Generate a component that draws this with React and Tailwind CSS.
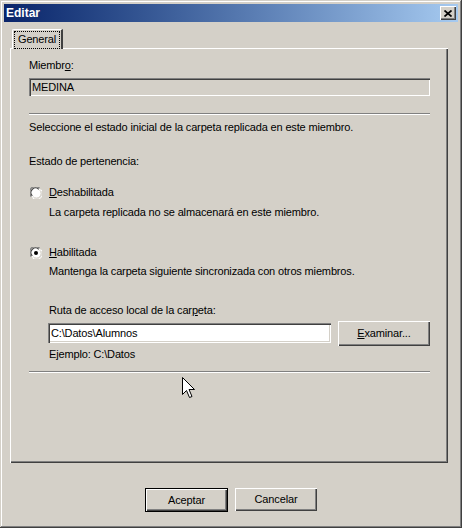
import React from "react";

const FONT = "[font-family:'Liberation_Sans',Arial,sans-serif]";
const TEXT = "text-[11px] leading-[13px] tracking-[-0.15px] text-black whitespace-nowrap";

const raised =
  "shadow-[inset_1px_1px_#ffffff,inset_-1px_-1px_#404040,inset_-2px_-2px_#808080]";
const sunken =
  "shadow-[inset_1px_1px_#808080,inset_2px_2px_#404040,inset_-1px_-1px_#ffffff,inset_-2px_-2px_#d4d0c8]";

function Radio({ checked }) {
  return (
    <span className="relative w-[12px] h-[12px] shrink-0">
      <svg width="12" height="12" viewBox="0 0 12 12" className="block">
        <circle cx="6" cy="6" r="5.5" fill="#ffffff" />
        <path d="M1.2 9.5 A5.5 5.5 0 0 1 9.5 1.2" stroke="#808080" strokeWidth="1.2" fill="none" />
        <path d="M2.3 8.8 A4.5 4.5 0 0 1 8.8 2.3" stroke="#404040" strokeWidth="1.2" fill="none" />
        <path d="M10.8 2.5 A5.5 5.5 0 0 1 2.5 10.8" stroke="#ffffff" strokeWidth="1" fill="none" />
        <path d="M9.7 3.2 A4.5 4.5 0 0 1 3.2 9.7" stroke="#d4d0c8" strokeWidth="1" fill="none" />
        {checked && <circle cx="6" cy="6" r="2" fill="#000000" />}
      </svg>
    </span>
  );
}

function Separator({ className = "" }) {
  return (
    <div className={`w-[401px] h-[2px] border-t border-[#808080] border-b border-b-white ${className}`} />
  );
}

export default function App() {
  return (
    <div className={`w-[464px] h-[530px] bg-white ${FONT}`}>
      <div
        className={`relative w-[462px] h-[528px] bg-[#d4d0c8] p-[4px] flex flex-col shadow-[inset_-1px_-1px_#404040,inset_1px_1px_#d4d0c8,inset_-2px_-2px_#808080,inset_2px_2px_#ffffff]`}
      >
        {/* Title bar */}
        <div className="h-[18px] flex items-center justify-between pl-[2px] pr-[2px] bg-linear-to-r from-[#0a246a] to-[#a6caf0]">
          <span className="text-[12px] font-bold text-white leading-[14px]">Editar</span>
          <button className={`w-[16px] h-[14px] bg-[#d4d0c8] flex items-center justify-center ${raised}`}>
            <svg width="8" height="7" viewBox="0 0 8 7">
              <path d="M0.5 0.5 L7.5 6.5 M7.5 0.5 L0.5 6.5" stroke="#000" strokeWidth="1.7" />
            </svg>
          </button>
        </div>

        {/* Tab */}
        <div className="mt-[7px] ml-[8px] relative z-10 -mb-[1px]">
          <div className="w-[51px] h-[20px] bg-[#d4d0c8] border-l border-t border-white border-r-2 border-r-[#404040] rounded-tl-[2px] flex items-start pt-[1px] pl-[1px]">
            <span className={`${TEXT} border border-dotted border-black px-[3px] pt-[1px] pb-[2px]`}>General</span>
          </div>
        </div>

        {/* Tab panel */}
        <div className="ml-[6px] w-[438px] h-[415px] pl-[19px] pt-[11px] flex flex-col shadow-[inset_1px_1px_#ffffff,inset_-1px_-1px_#404040,inset_-2px_-2px_#808080]">
          <div className={TEXT}>
            Miembr<span className="underline">o</span>:
          </div>
          <div className={`mt-[6px] w-[401px] h-[18px] bg-[#d4d0c8] pl-[3px] flex items-center ${sunken}`}>
            <span className={`${TEXT} text-[#404040]`}>MEDINA</span>
          </div>

          <Separator className="mt-[17px]" />

          <div className={`${TEXT} mt-[6px]`}>
            Seleccione el estado inicial de la carpeta replicada en este miembro.
          </div>
          <div className={`${TEXT} mt-[21px]`}>Estado de pertenencia:</div>

          <div className="mt-[18px] flex items-center gap-[7px] pl-[1px] h-[13px]">
            <Radio />
            <span className={TEXT}>
              <span className="underline">D</span>eshabilitada
            </span>
          </div>
          <div className={`${TEXT} mt-[7px] pl-[20px]`}>
            La carpeta replicada no se almacenará en este miembro.
          </div>

          <div className="mt-[27px] flex items-center gap-[7px] pl-[1px] h-[13px]">
            <Radio checked />
            <span className={TEXT}>
              <span className="underline">H</span>abilitada
            </span>
          </div>
          <div className={`${TEXT} mt-[6px] pl-[20px]`}>
            Mantenga la carpeta siguiente sincronizada con otros miembros.
          </div>

          <div className={`${TEXT} mt-[26px] pl-[20px]`}>
            Ruta de acceso local de la car<span className="underline">p</span>eta:
          </div>
          <div className="mt-[4px] pl-[19px] h-[24px] flex items-center gap-[7px]">
            <div className={`w-[283px] h-[20px] bg-white pl-[3px] flex items-center ${sunken}`}>
              <span className={TEXT}>C:\Datos\Alumnos</span>
            </div>
            <button className={`w-[92px] h-[25px] bg-[#d4d0c8] flex items-center justify-center ${raised}`}>
              <span className={TEXT}>
                <span className="underline">E</span>xaminar...
              </span>
            </button>
          </div>
          <div className={`${TEXT} mt-[3px] pl-[20px]`}>Ejemplo: C:\Datos</div>

          <Separator className="mt-[10px]" />
        </div>

        {/* Bottom buttons */}
        <div className="mt-[25px] flex justify-center gap-[7px]">
          <button className="w-[83px] h-[24px] bg-[#d4d0c8] border border-black flex items-center justify-center shadow-[inset_1px_1px_#ffffff,inset_-1px_-1px_#404040,inset_-2px_-2px_#808080]">
            <span className={TEXT}>Aceptar</span>
          </button>
          <button className={`w-[82px] h-[23px] bg-[#d4d0c8] flex items-center justify-center ${raised}`}>
            <span className={TEXT}>Cancelar</span>
          </button>
        </div>

        {/* Mouse pointer */}
        <svg
          className="absolute left-[182px] top-[377px]"
          width="13"
          height="22"
          viewBox="0 0 13 22"
        >
          <path
            d="M0.5 0.5 L0.5 17.5 L4.5 13.5 L7.5 20.5 L10 19.5 L7 12.5 L12.5 12.5 Z"
            fill="#ffffff"
            stroke="#000000"
            strokeWidth="1"
            strokeLinejoin="miter"
          />
        </svg>
      </div>
    </div>
  );
}
